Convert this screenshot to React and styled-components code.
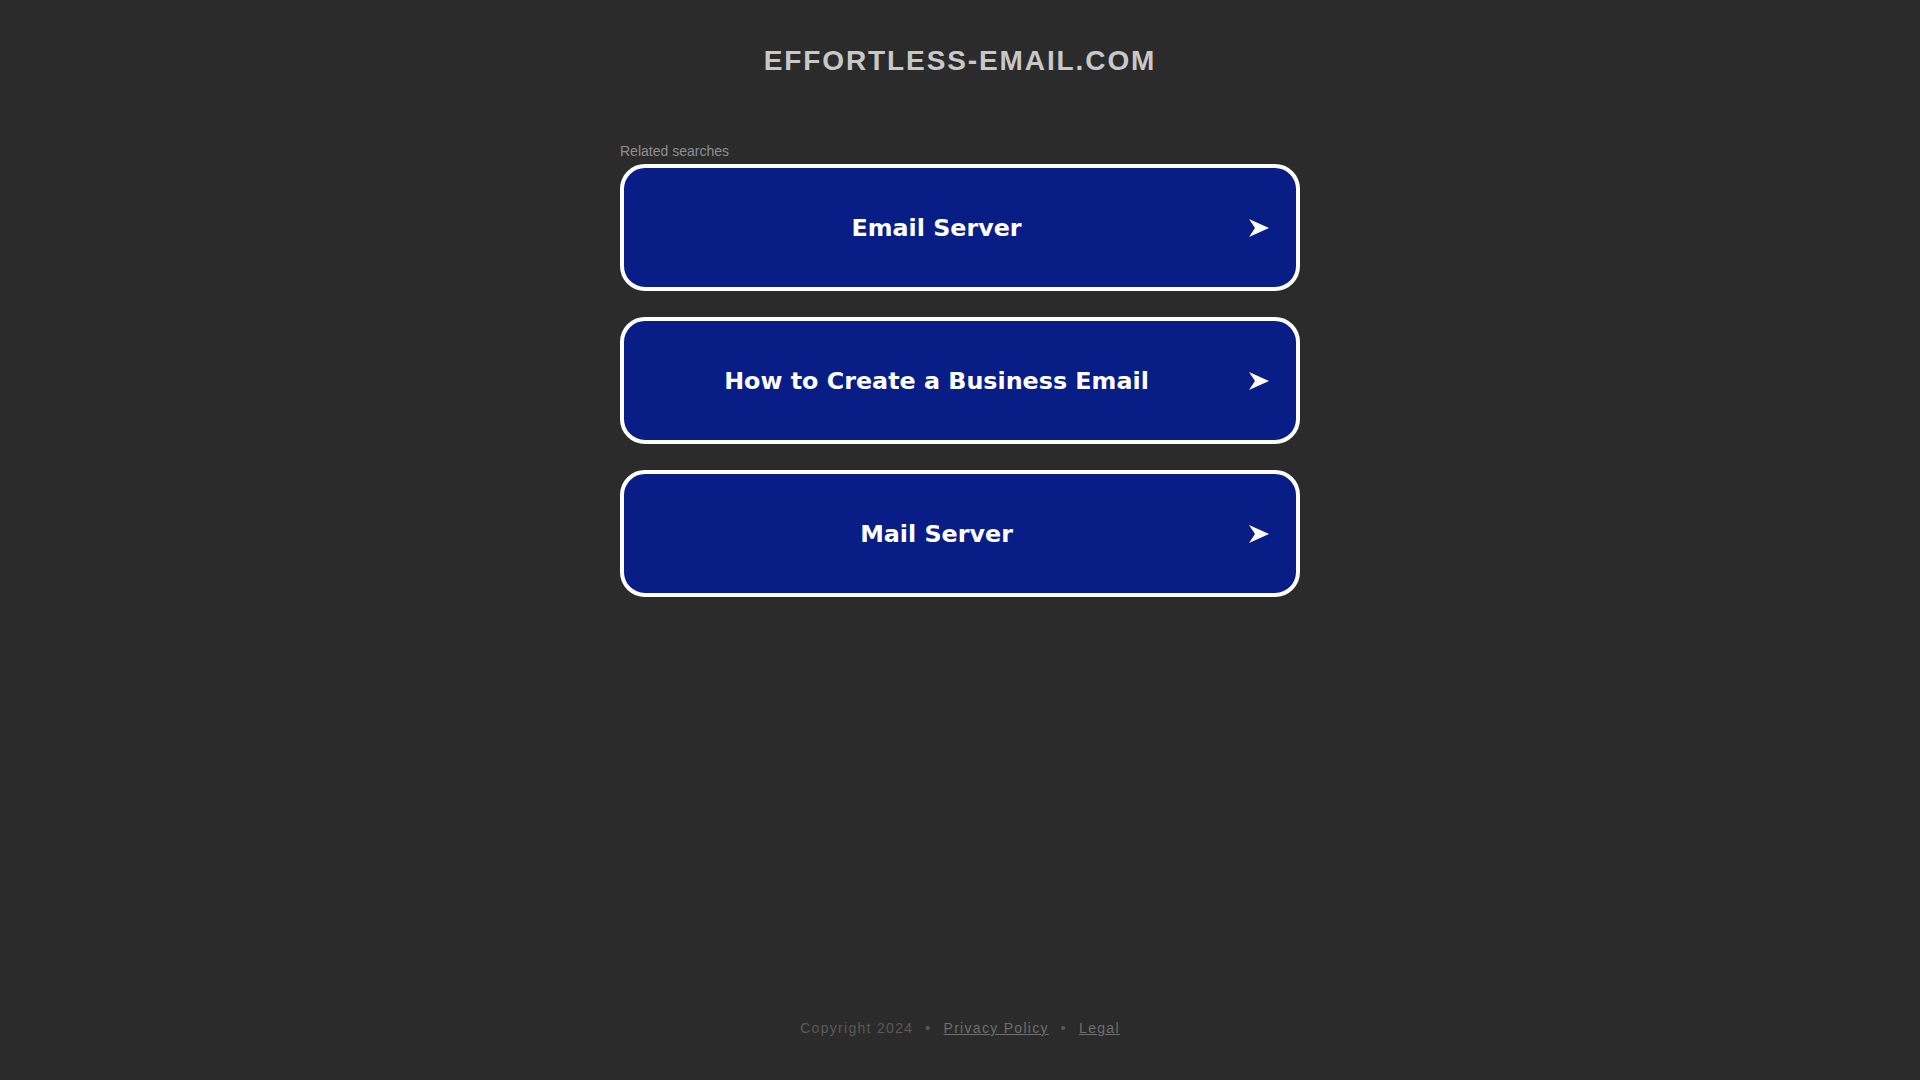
import styled, { createGlobalStyle } from "styled-components";

const links = ["Email Server", "How to Create a Business Email", "Mail Server"];

const App = () => (
  <>
    <GlobalStyle />
    <Page>
      <Title>effortless-email.com</Title>
      <Results>
        <Label>Related searches</Label>
        <List>
          {links.map((text) => (
            <Card key={text} href="#">
              <CardText>{text}</CardText>
              <Arrow viewBox="0 0 20 18">
                <path d="M0 0 L20 9 L0 18 L6 9 Z" fill="#fff" />
              </Arrow>
            </Card>
          ))}
        </List>
      </Results>
      <Footer>
        <span>Copyright 2024</span>
        <Dot>•</Dot>
        <FooterLink href="#">Privacy Policy</FooterLink>
        <Dot>•</Dot>
        <FooterLink href="#">Legal</FooterLink>
      </Footer>
    </Page>
  </>
);

export default App;

const GlobalStyle = createGlobalStyle`
  html, body {
    margin: 0;
    background: #2b2b2b;
    font-family: "Liberation Sans", Arial, sans-serif;
  }
`;

const Page = styled.div`
  min-height: 100vh;
  display: flex;
  flex-direction: column;
  align-items: center;
`;

const Title = styled.h1`
  margin: 0;
  padding-top: 44px;
  font-size: 28px;
  line-height: 34px;
  font-weight: bold;
  letter-spacing: 1.9px;
  text-transform: uppercase;
  color: #c8c8c8;
`;

const Results = styled.div`
  width: 680px;
  margin-top: 65px;
`;

const Label = styled.div`
  font-size: 14px;
  line-height: 16px;
  color: #8f8f8f;
  margin-bottom: 5px;
`;

const List = styled.div`
  display: flex;
  flex-direction: column;
  gap: 26px;
`;

const Card = styled.a`
  box-sizing: border-box;
  height: 127px;
  display: flex;
  align-items: center;
  padding-right: 27px;
  background: #081d85;
  border: 4px solid #fff;
  border-radius: 25px;
  text-decoration: none;
`;

const CardText = styled.span`
  flex: 1;
  padding-top: 1px;
  text-align: center;
  font-family: "DejaVu Sans", Verdana, sans-serif;
  font-weight: bold;
  font-size: 23.8px;
  color: #fff;
`;

const Arrow = styled.svg`
  width: 20px;
  height: 18px;
  flex: none;
`;

const Footer = styled.footer`
  margin-top: auto;
  padding-bottom: 44px;
  display: flex;
  align-items: center;
  font-size: 14px;
  line-height: 16px;
  letter-spacing: 1.3px;
  color: #5a5a5a;
`;

const Dot = styled.span`
  margin: 0 12px;
`;

const FooterLink = styled.a`
  color: #6e6e6e;
  text-decoration: underline;
`;
